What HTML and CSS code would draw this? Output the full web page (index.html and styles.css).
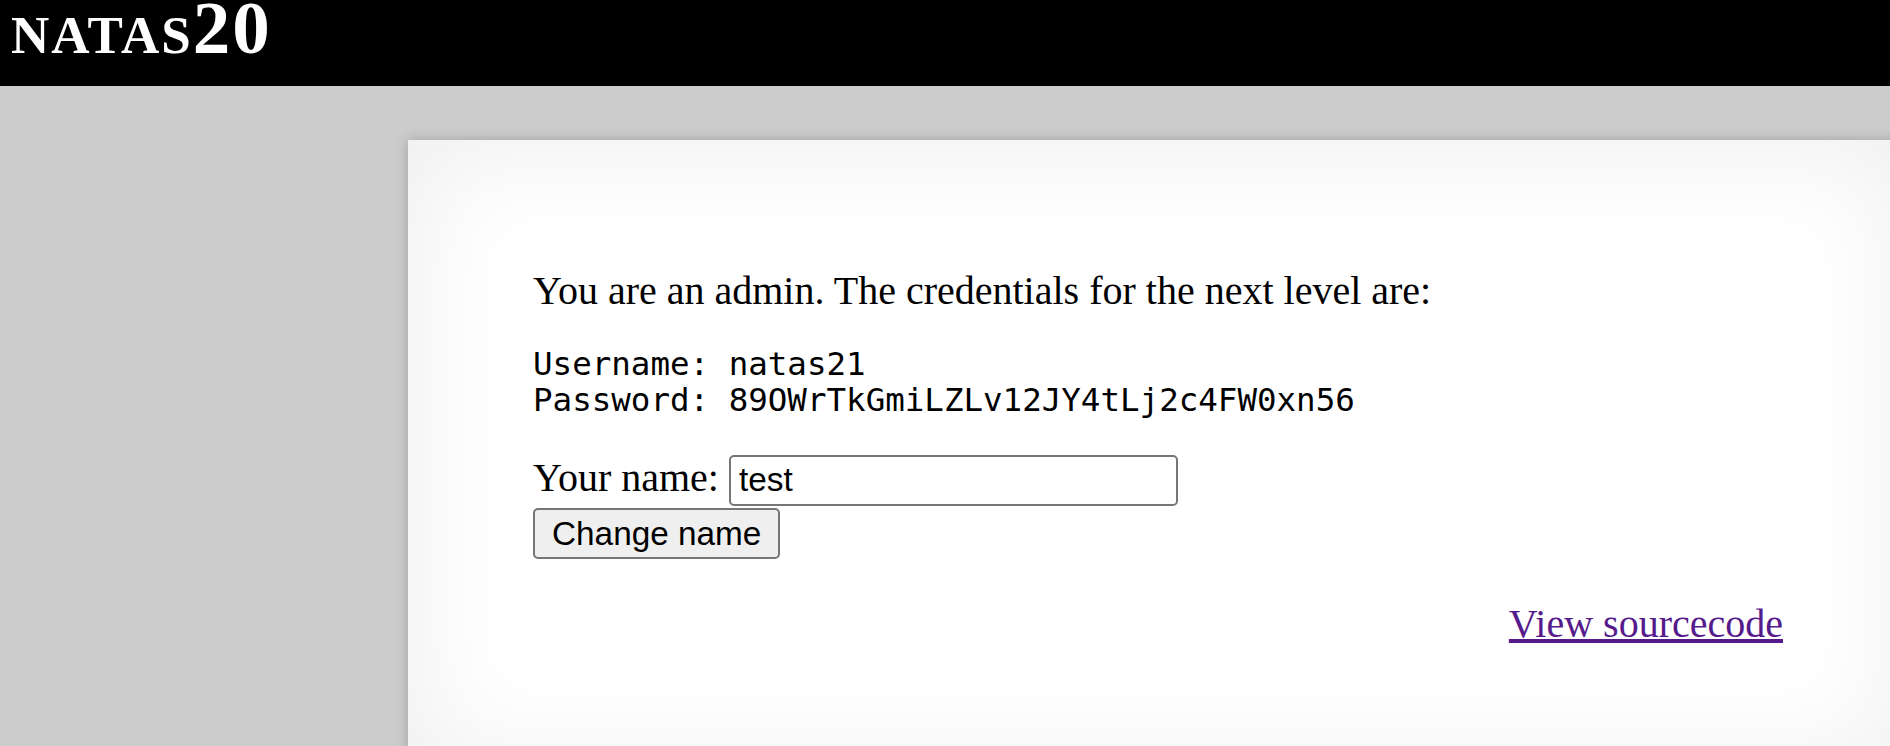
FILE: index.html
```
<!DOCTYPE html>
<html>
<head>
<meta charset="utf-8">
<title>natas20</title>
<link rel="stylesheet" href="styles.css">
</head>
<body>
<h1 class="banner">natas<span class="level">20</span></h1>
<div class="card">
<div class="intro">You are an admin. The credentials for the next level are:</div>
<pre class="creds">Username: natas21
Password: 89OWrTkGmiLZLv12JY4tLj2c4FW0xn56</pre>
<form class="name-form">
<div class="name-row">Your name: <input class="name-input" type="text" name="name" value="test"></div>
<div class="btn-row"><input class="name-btn" type="submit" value="Change name"></div>
</form>
<div class="source-row"><a class="source-link" href="#">View sourcecode</a></div>
</div>
</body>
</html>
```
FILE: styles.css
```
html, body {
  overflow: hidden;
}
body {
  margin: 0;
  background: #cccccc;
  font-family: "Liberation Serif", "Times New Roman", serif;
  font-size: 40px;
  color: #000;
  height: 746px;
}
.banner {
  margin: 0;
  height: 86px;
  box-sizing: border-box;
  background: #000;
  color: #fff;
  font-family: "Liberation Serif", serif;
  font-weight: bold;
  font-size: 75px;
  line-height: 55px;
  padding-left: 11px;
  letter-spacing: 2px;
  font-variant: small-caps;
}
.card {
  margin: 54px 0 0 408px;
  width: 1250px;
  padding: 127px 125px 125px 125px;
  background: #fff;
  box-shadow: 0 0 12px rgba(0, 0, 0, 0.22), inset 0 0 110px 10px rgba(0, 0, 0, 0.065);
}
.intro {
  line-height: normal;
}
.creds {
  font-family: "DejaVu Sans Mono", monospace;
  font-size: 32.5px;
  line-height: 36.7px;
  margin: 31.5px 0 35.4px 0;
}
.name-form {
  margin: 0;
}
.name-row {
  margin-top: 0;
}
.name-input {
  font-family: "Liberation Sans", Arial, sans-serif;
  font-size: 33.33px;
  width: 449px;
  height: 51px;
  box-sizing: border-box;
  border: 2px solid #767676;
  border-radius: 5px;
  padding: 0 8px;
  margin: 0;
  background: #fff;
  color: #000;
}
.btn-row {
  margin-top: 2px;
}
.name-btn {
  font-family: "Liberation Sans", Arial, sans-serif;
  font-size: 33.33px;
  height: 51px;
  box-sizing: border-box;
  border: 2px solid #767676;
  border-radius: 5px;
  padding: 0 17px;
  margin: 0;
  background: #efefef;
  color: #000;
}
.source-row {
  text-align: right;
  margin-top: 40.6px;
}
.source-link {
  color: #551a8b;
  text-decoration: underline;
}
```
